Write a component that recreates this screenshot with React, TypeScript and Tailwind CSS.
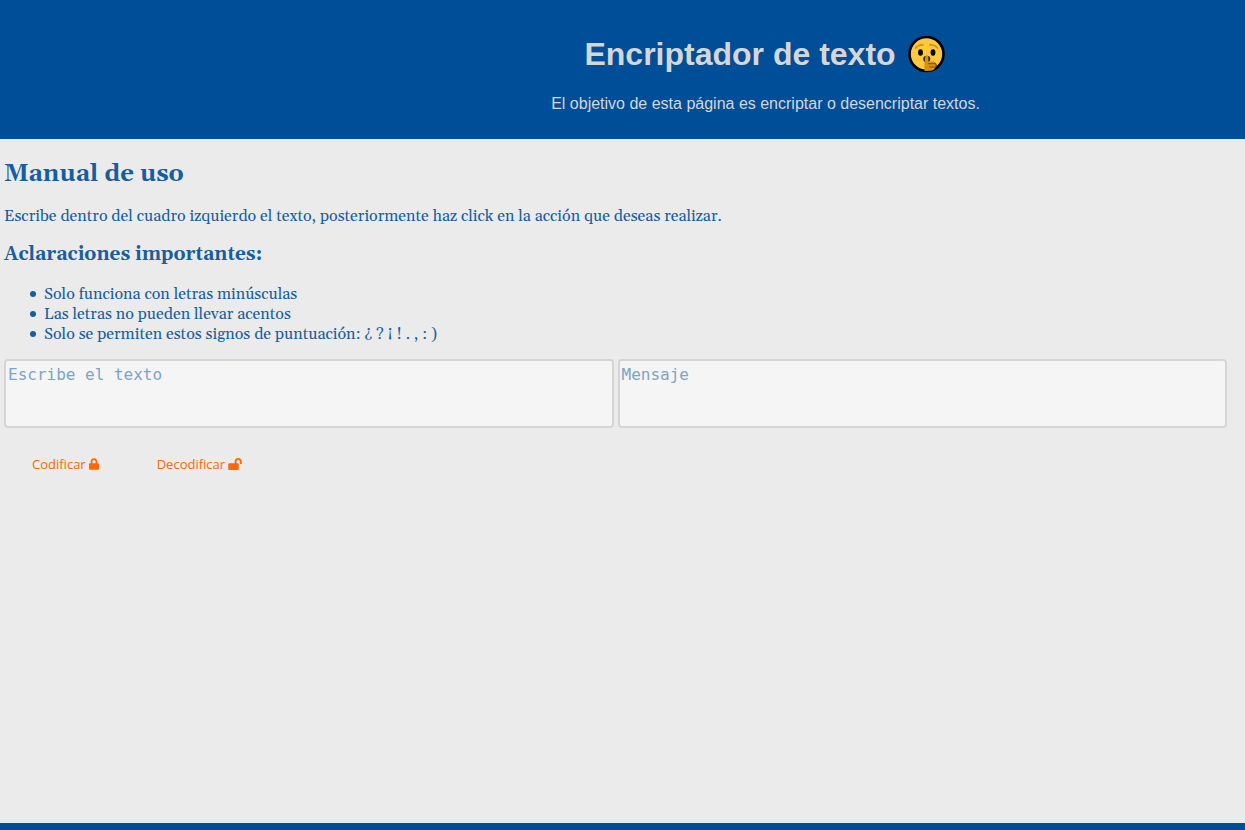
import { FaLock, FaLockOpen } from "react-icons/fa";

function ShushingFace() {
  return (
    <svg viewBox="0 0 37 37" className="h-[37px] w-[37px]" role="img" aria-label="Silencio">
      <circle cx="18.5" cy="18" r="17" fill="#ffc83d" stroke="#000" strokeWidth="2.6" />
      <path d="M7.500 12Q10 8.500 15 8.800M22 8.800Q27 8.500 29.500 12" fill="none" stroke="#d9930f" strokeWidth="1.800" strokeLinecap="round" />
      <ellipse cx="12.500" cy="16.500" rx="2.400" ry="3.300" fill="#000" />
      <ellipse cx="25" cy="16.500" rx="2.400" ry="3.300" fill="#000" />
      <ellipse cx="18.800" cy="23" rx="3.500" ry="3.200" fill="#2b1a08" />
      <path d="M16.500 35V27L17.300 20.500Q18.800 18.300 20.300 20.500L20.500 25.500H26Q28.500 26.500 28 28.500Q29 30 27.500 31.500Q26.500 34 23 34.700Z" fill="#d6900f" />
      <path d="M20.500 27.700H27.500L28.500 29.500L27 31H21.500" fill="none" stroke="#8a5230" strokeWidth="1.200" strokeLinecap="round" />
    </svg>
  );
}

const notes = [
  "Solo funciona con letras minúsculas",
  "Las letras no pueden llevar acentos",
  "Solo se permiten estos signos de puntuación: ¿ ? ¡ ! . , : )",
];

const boxClass =
  "block h-[69px] resize-none rounded border-2 border-[#d5d5d5] bg-[#f5f5f5] px-0.5 py-1 font-['DejaVu_Sans_Mono',monospace] text-base leading-5 text-[#175da0] placeholder:text-[#7ca4ca] focus:outline-none";
const buttonClass =
  "flex items-center justify-center gap-[3px] py-2 font-['Open_Sans',sans-serif] text-[13px] leading-5 text-[#ff6700]";

export default function App() {
  return (
    <div className="flex min-h-screen flex-col bg-[#ebebeb]">
      <header className="bg-[#004e98] pt-[34px] pr-1 pb-[25px] pl-[23.3%] text-center font-['Liberation_Sans',sans-serif] text-[#d6d6d6]">
        <h1 className="flex items-center justify-center gap-3 pr-0.5 text-[32px] leading-10 font-bold">
          Encriptador de texto
          <ShushingFace />
        </h1>
        <p className="mt-5 text-base leading-5">
          El objetivo de esta página es encriptar o desencriptar textos.
        </p>
      </header>
      <main className="flex-1 pr-[18px] pl-1">
        <section className="font-[Georgia,Gelasio,'Liberation_Serif',serif] text-base leading-5 text-[#175da0]">
          <h2 className="pt-[21px] text-2xl leading-7 font-bold">Manual de uso</h2>
          <p className="mt-[18px]">
            Escribe dentro del cuadro izquierdo el texto, posteriormente haz click en la acción que deseas realizar.
          </p>
          <h3 className="mt-[18px] text-[19px] leading-5 font-bold">Aclaraciones importantes:</h3>
          <ul className="mt-5 pl-[26px]">
            {notes.map((note) => (
              <li
                key={note}
                className="flex items-center gap-2 before:h-1.5 before:w-1.5 before:rounded-full before:bg-[#175da0]"
              >
                {note}
              </li>
            ))}
          </ul>
        </section>
        <div className="mt-[15px] grid grid-cols-2 gap-1">
          <textarea aria-label="Escribe el texto" placeholder="Escribe el texto" className={boxClass} />
          <textarea aria-label="Mensaje" placeholder="Mensaje" readOnly className={boxClass} />
        </div>
        <div className="mt-[18px] flex gap-[58px] pl-7">
          <button type="button" className={buttonClass}>
            Codificar <FaLock className="h-3 w-[10px]" aria-hidden="true" />
          </button>
          <button type="button" className={buttonClass}>
            Decodificar <FaLockOpen className="h-3 w-[14px]" aria-hidden="true" />
          </button>
        </div>
      </main>
      <footer className="h-[7px] bg-[#004e98]" />
    </div>
  );
}
